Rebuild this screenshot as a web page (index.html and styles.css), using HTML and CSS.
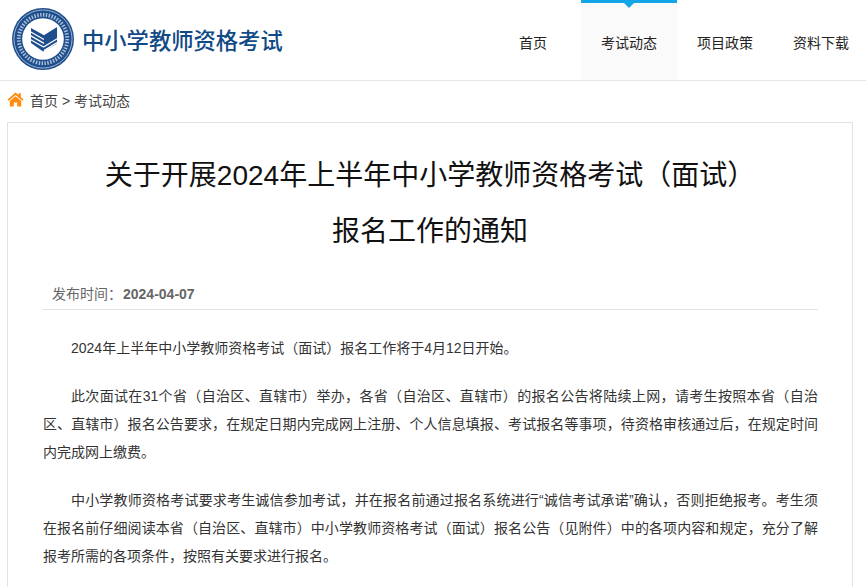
FILE: index.html
```html
<!DOCTYPE html>
<html lang="zh-CN">
<head>
  <meta charset="UTF-8">
  <meta name="viewport" content="width=device-width, initial-scale=1">
  <title>考试动态</title>
  <link rel="stylesheet" href="styles.css">
</head>
<body>
  <header class="header">
    <div class="brand">
      <svg class="logo" width="62" height="62" viewBox="0 0 64 64">
        <circle cx="32" cy="32" r="32" fill="#1f4e8c"/>
        <circle cx="32" cy="32" r="30" fill="none" stroke="#d7e2ef" stroke-width="0.7"/>
        <circle cx="32" cy="32" r="25" fill="none" stroke="#a9bfd9" stroke-width="4" stroke-dasharray="1.5 1.5"/>
        <circle cx="32" cy="32" r="21.500" fill="#fff"/>
        <path d="M19.600 20.600 33 28 46.500 19.600V37L32 45 19.600 36Z" fill="#1f4e8c"/>
        <path d="M19 24.500 33 32.500M19 28.500 33 36.500M19 32.500 33 40.500M33 40 47 31.500M33 44 47 35.500" fill="none" stroke="#fff" stroke-width="1.300"/>
      </svg>
      <span class="site-name">中小学教师资格考试</span>
    </div>
    <nav class="nav">
      <a class="nav-item">首页</a>
      <a class="nav-item active">考试动态</a>
      <a class="nav-item">项目政策</a>
      <a class="nav-item">资料下载</a>
    </nav>
  </header>

  <div class="crumbs">
    <svg class="home-icon" width="17" height="15" viewBox="0 0 17 15">
      <path d="M8.500 0.500 0.500 7.500 1.700 8.700 8.500 2.900 15.300 8.700 16.500 7.500 13.800 5.100V1.200H11.500V3.100Z" fill="#ff8a0c"/>
      <path d="M8.500 4.200 2.800 9V14.500H6.800V10.500H10.200V14.500H14.200V9Z" fill="#ff8a0c"/>
    </svg>
    <span>首页 &gt; 考试动态</span>
  </div>

  <main class="card">
    <h1 class="title">关于开展2024年上半年中小学教师资格考试（面试）<br>报名工作的通知</h1>
    <div class="meta">发布时间：<b>2024-04-07</b></div>
    <div class="content">
      <p>2024年上半年中小学教师资格考试（面试）报名工作将于4月12日开始。</p>
      <p>此次面试在31个省（自治区、直辖市）举办，各省（自治区、直辖市）的报名公告将陆续上网，请考生按照本省（自治区、直辖市）报名公告要求，在规定日期内完成网上注册、个人信息填报、考试报名等事项，待资格审核通过后，在规定时间内完成网上缴费。</p>
      <p>中小学教师资格考试要求考生诚信参加考试，并在报名前通过报名系统进行“诚信考试承诺”确认，否则拒绝报考。考生须在报名前仔细阅读本省（自治区、直辖市）中小学教师资格考试（面试）报名公告（见附件）中的各项内容和规定，充分了解报考所需的各项条件，按照有关要求进行报名。</p>
    </div>
  </main>
</body>
</html>
```

FILE: styles.css
```css
* {
  box-sizing: border-box;
}
html, body {
  height: 587px;
  overflow: hidden;
}
body {
  margin: 0;
  font-family: "Liberation Sans", "Noto Sans CJK SC", sans-serif;
  background: #fff;
  color: #333;
}
.header {
  display: flex;
  justify-content: space-between;
  height: 81px;
  padding-left: 12px;
  border-bottom: 1px solid #e5e5e5;
}
.brand {
  display: flex;
  align-items: center;
  gap: 8px;
  margin-top: -3px;
}
.site-name {
  font-size: 22.3px;
  font-weight: 500;
  color: #124a86;
}
.nav {
  display: flex;
  flex: none;
  margin-right: -3px;
}
.nav-item {
  width: 96px;
  height: 80px;
  padding-top: 33px;
  font-size: 14px;
  line-height: 20px;
  text-align: center;
  color: #222;
  position: relative;
}
.nav-item.active {
  background: #fafafa;
  border-top: 3px solid #12a6e8;
  padding-top: 30px;
}
.nav-item.active::after {
  content: "";
  position: absolute;
  top: 0;
  left: 43px;
  border: 5px solid transparent;
  border-bottom: 0;
  border-top: 5px solid #12a6e8;
}
.crumbs {
  display: flex;
  align-items: center;
  gap: 6px;
  height: 41px;
  padding: 0 0 4px 7px;
  font-size: 14px;
  color: #444;
}
.card {
  margin: 0 13px 0 7px;
  padding: 25px 34px 0 35px;
  height: 465px;
  border: 1px solid #e2e2e2;
  border-bottom: 0;
}
.title {
  margin: 0 1px 0 0;
  font-size: 28px;
  font-weight: normal;
  line-height: 56px;
  text-align: center;
  color: #111;
}
.meta {
  margin-top: 20px;
  padding-left: 9px;
  height: 30px;
  line-height: 28px;
  font-size: 14px;
  color: #666;
  border-bottom: 1px solid #e0e0e0;
}
.meta b {
  margin-left: 1px;
}
.content {
  padding-top: 24px;
}
.content p {
  margin: 0 0 20px;
  font-size: 14px;
  line-height: 28px;
  text-indent: 2em;
  text-align: justify;
  color: #333;
}
.content p:last-child {
  margin-bottom: 0;
}
```
